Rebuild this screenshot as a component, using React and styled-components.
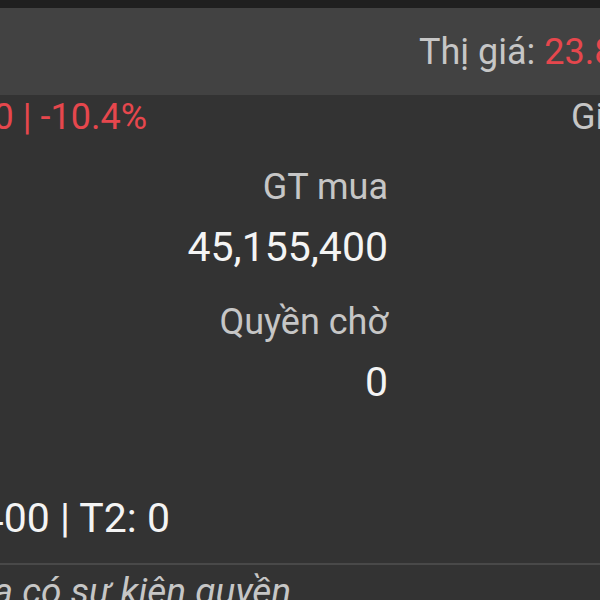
import React from 'react';
import styled, { createGlobalStyle } from 'styled-components';

const GlobalStyle = createGlobalStyle`
    html, body {
        margin: 0;
        padding: 0;
        background: #333333;
    }
    body {
        font-family: Roboto, "Noto Sans", sans-serif;
    }
`;

const Screen = styled.div`
    width: 600px;
    height: 600px;
    overflow: hidden;
    background: #333333;
    white-space: nowrap;
`;

const StatusBar = styled.div`
    height: 8px;
    background: #1f1f1f;
`;

const Header = styled.div`
    display: flex;
    align-items: center;
    height: 87px;
    padding-left: 419px;
    background: #424242;
    font-size: 36px;
    line-height: 42px;
`;

const Label = styled.span`
    color: #c6c6c6;
`;

const Red = styled.span`
    color: #e6474d;
`;

const ChangeRow = styled.div`
    display: grid;
    grid-template-columns: 147px 424px 29px;
    padding-top: 1px;
    font-size: 36px;
    line-height: 42px;
`;

// text that is cut on the left, so it hangs from its right edge
const Trailing = styled.div`
    display: flex;
    justify-content: flex-end;
    width: ${p => p.$width}px;
`;

const Leading = styled.div`
    display: flex;
    justify-content: flex-start;
`;

const StatColumn = styled.div`
    display: flex;
    flex-direction: column;
    align-items: flex-end;
    width: 388px;
    margin-top: 28px;
    gap: 30px;
`;

const Stat = styled.div`
    display: flex;
    flex-direction: column;
    align-items: flex-end;
    gap: 15px;
`;

const StatLabel = styled.div`
    color: #c6c6c6;
    font-size: 36px;
    line-height: 42px;
`;

const StatValue = styled.div`
    color: #f4f4f4;
    font-size: 41px;
    line-height: 48px;
`;

const SettleRow = styled(Trailing)`
    margin-top: 88px;
    color: #f4f4f4;
    font-size: 41px;
    line-height: 48px;
`;

const Divider = styled.div`
    height: 2px;
    margin-top: 21px;
    background: #494949;
`;

const EmptyNote = styled(Trailing)`
    margin-top: 6px;
    color: #c6c6c6;
    font-size: 37px;
    line-height: 42px;
    font-style: italic;
`;

export default function App() {
    return (
        <>
            <GlobalStyle />
            <Screen>
                <StatusBar />
                <Header>
                    <Label>Thị giá:&nbsp;</Label>
                    <Red>23.80</Red>
                </Header>
                <ChangeRow>
                    <Trailing $width={147}>
                        <Red>-2,770 | -10.4%</Red>
                    </Trailing>
                    <div />
                    <Leading>
                        <Label>Giá vốn</Label>
                    </Leading>
                </ChangeRow>
                <StatColumn>
                    <Stat>
                        <StatLabel>GT mua</StatLabel>
                        <StatValue>45,155,400</StatValue>
                    </Stat>
                    <Stat>
                        <StatLabel>Quyền chờ</StatLabel>
                        <StatValue>0</StatValue>
                    </Stat>
                </StatColumn>
                <SettleRow $width={170}>T0: 1,400 | T2: 0</SettleRow>
                <Divider />
                <EmptyNote $width={291}>Chưa có sự kiện quyền</EmptyNote>
            </Screen>
        </>
    );
}
